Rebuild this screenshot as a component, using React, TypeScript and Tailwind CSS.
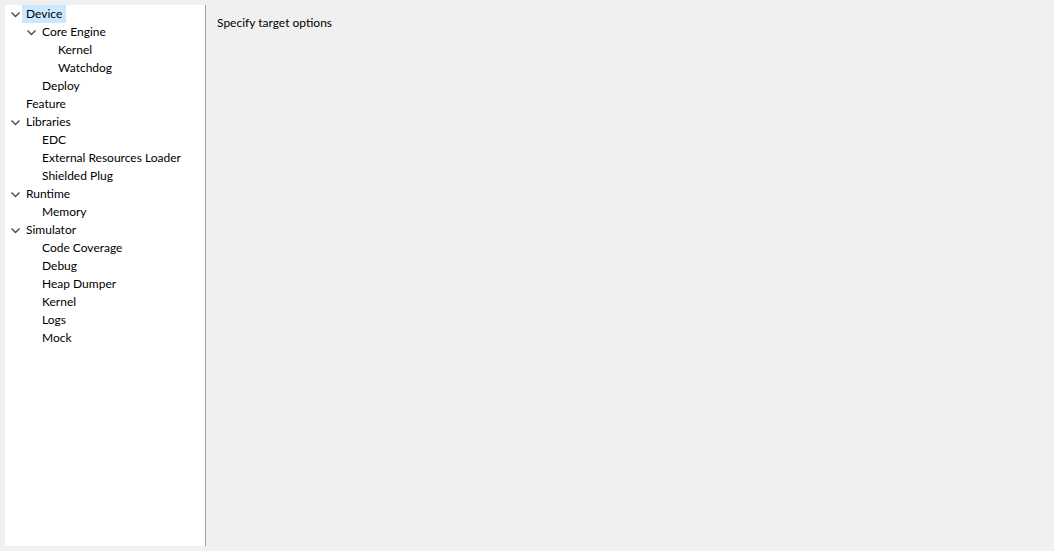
import React from "react";

type Node = { label: string; level: number; expanded?: boolean; selected?: boolean };

const nodes: Node[] = [
  { label: "Device", level: 0, expanded: true, selected: true },
  { label: "Core Engine", level: 1, expanded: true },
  { label: "Kernel", level: 2 },
  { label: "Watchdog", level: 2 },
  { label: "Deploy", level: 1 },
  { label: "Feature", level: 0 },
  { label: "Libraries", level: 0, expanded: true },
  { label: "EDC", level: 1 },
  { label: "External Resources Loader", level: 1 },
  { label: "Shielded Plug", level: 1 },
  { label: "Runtime", level: 0, expanded: true },
  { label: "Memory", level: 1 },
  { label: "Simulator", level: 0, expanded: true },
  { label: "Code Coverage", level: 1 },
  { label: "Debug", level: 1 },
  { label: "Heap Dumper", level: 1 },
  { label: "Kernel", level: 1 },
  { label: "Logs", level: 1 },
  { label: "Mock", level: 1 },
];

const indentClass = ["pl-0", "pl-[16px]", "pl-[32px]"];

function Chevron() {
  return (
    <svg width="16" height="18" viewBox="0 0 16 18" className="shrink-0">
      <path d="M1.5 7.5 L5.5 11.5 L9.5 7.5" fill="none" stroke="#505050" strokeWidth="1.5" />
    </svg>
  );
}

export default function App() {
  return (
    <div
      className="w-[1054px] h-[551px] bg-[#f0f0f0] p-[5px] flex text-[12px] text-[#000000]"
      style={{ fontFamily: '"Segoe UI", Lato, "Noto Sans", sans-serif' }}
    >
      <div className="w-[201px] h-[541px] bg-white border-r border-[#a0a0a0] flex flex-col pl-[5px]">
        {nodes.map((n, i) => (
          <div key={i} className={`flex items-center h-[18px] ${indentClass[n.level]}`}>
            {n.expanded ? <Chevron /> : <span className="w-[16px] shrink-0" />}
            <span
              className={`h-[18px] leading-[18px] px-[4px] ml-[-4px] whitespace-nowrap ${
                n.selected ? "bg-[#cce8ff]" : ""
              }`}
            >
              {n.label}
            </span>
          </div>
        ))}
      </div>
      <div className="flex-1 pl-[11px] pt-[9px]">
        <div className="leading-[18px]">Specify target options</div>
      </div>
    </div>
  );
}
